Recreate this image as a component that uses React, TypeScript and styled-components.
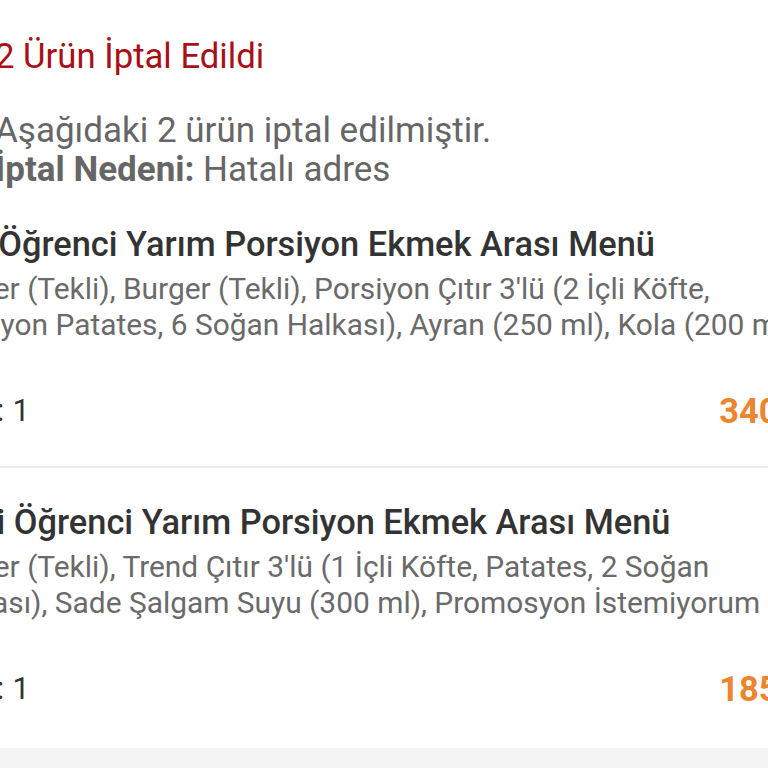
import React from "react";
import styled, { createGlobalStyle } from "styled-components";

const GlobalStyle = createGlobalStyle`
  html, body { margin: 0; padding: 0; background: #ffffff; }
  body { overflow: hidden; font-family: Roboto, "Noto Sans", Arial, sans-serif; }
`;

const Page = styled.div`
  width: 768px;
  height: 768px;
  overflow: hidden;
  display: flex;
  flex-direction: column;
  background: #ffffff;
`;

const Header = styled.section`
  display: flex;
  flex-direction: column;
  margin-left: -5px;
  padding-top: 36px;
`;

const Title = styled.h1`
  margin: 0;
  font-size: 34.7px;
  line-height: 40px;
  font-weight: 400;
  color: #a80f16;
  white-space: nowrap;
`;

const Message = styled.p`
  margin: 35px 0 0;
  font-size: 35px;
  line-height: 39px;
  color: #666666;
  white-space: nowrap;
`;

const Strong = styled.b`
  font-weight: 700;
  color: #666666;
`;

const List = styled.div`
  display: flex;
  flex-direction: column;
  margin-top: 35px;
  flex: 1;
`;

const Item = styled.article<{ $last?: boolean }>`
  display: flex;
  flex-direction: column;
  width: 946px;
  margin-left: -68px;
  padding-top: ${(p) => (p.$last ? "34px" : "0")};
  padding-bottom: ${(p) => (p.$last ? "30px" : "37px")};
  border-bottom: ${(p) => (p.$last ? "none" : "2px solid #ececec")};
`;

const Name = styled.h2`
  margin: 0;
  font-size: 34.4px;
  line-height: 40px;
  font-weight: 500;
  color: #333333;
  white-space: nowrap;
`;

const Desc = styled.div`
  margin-top: 7px;
  display: flex;
  flex-direction: column;
  font-size: 29.9px;
  line-height: 36px;
  color: #6a6a6a;
`;

const DescLine = styled.span`
  white-space: nowrap;
`;

const Footer = styled.div`
  display: flex;
  justify-content: space-between;
  align-items: baseline;
  margin-top: 48px;
  width: 942px;
`;

const Qty = styled.span`
  font-size: 30.5px;
  line-height: 36px;
  color: #333333;
  white-space: nowrap;
  letter-spacing: 0.4px;
`;

const Price = styled.span`
  font-size: 34.4px;
  line-height: 36px;
  font-weight: 700;
  color: #ec8430;
  white-space: nowrap;
  position: relative;
  top: 2px;
`;

const BottomBand = styled.div`
  height: 20px;
  background: #f3f3f3;
  flex: none;
  margin-top: auto;
`;

type Product = {
  name: string;
  lines: string[];
  qty: number;
  price: string;
};

const products: Product[] = [
  {
    name: "Dev Öğrenci Yarım Porsiyon Ekmek Arası Menü",
    lines: [
      "Burger (Tekli), Burger (Tekli), Porsiyon Çıtır 3'lü (2 İçli Köfte,",
      "Porsiyon Patates, 6 Soğan Halkası), Ayran (250 ml), Kola (200 ml)",
    ],
    qty: 1,
    price: "340,00 TL",
  },
  {
    name: "Tekli Öğrenci Yarım Porsiyon Ekmek Arası Menü",
    lines: [
      "Burger (Tekli), Trend Çıtır 3'lü (1 İçli Köfte, Patates, 2 Soğan",
      "Halkası), Sade Şalgam Suyu (300 ml), Promosyon İstemiyorum",
    ],
    qty: 1,
    price: "185,00 TL",
  },
];

export default function App() {
  return (
    <>
      <GlobalStyle />
      <Page>
        <Header>
          <Title>2 Ürün İptal Edildi</Title>
          <Message>
            Aşağıdaki 2 ürün iptal edilmiştir.
            <br />
            <Strong>İptal Nedeni:</Strong> Hatalı adres
          </Message>
        </Header>
        <List>
          {products.map((p, i) => (
            <Item key={i} $last={i === products.length - 1}>
              <Name>{p.name}</Name>
              <Desc>
                {p.lines.map((l, j) => (
                  <DescLine key={j}>{l}</DescLine>
                ))}
              </Desc>
              <Footer>
                <Qty>Adet: {p.qty}</Qty>
                <Price>{p.price}</Price>
              </Footer>
            </Item>
          ))}
        </List>
        <BottomBand />
      </Page>
    </>
  );
}
